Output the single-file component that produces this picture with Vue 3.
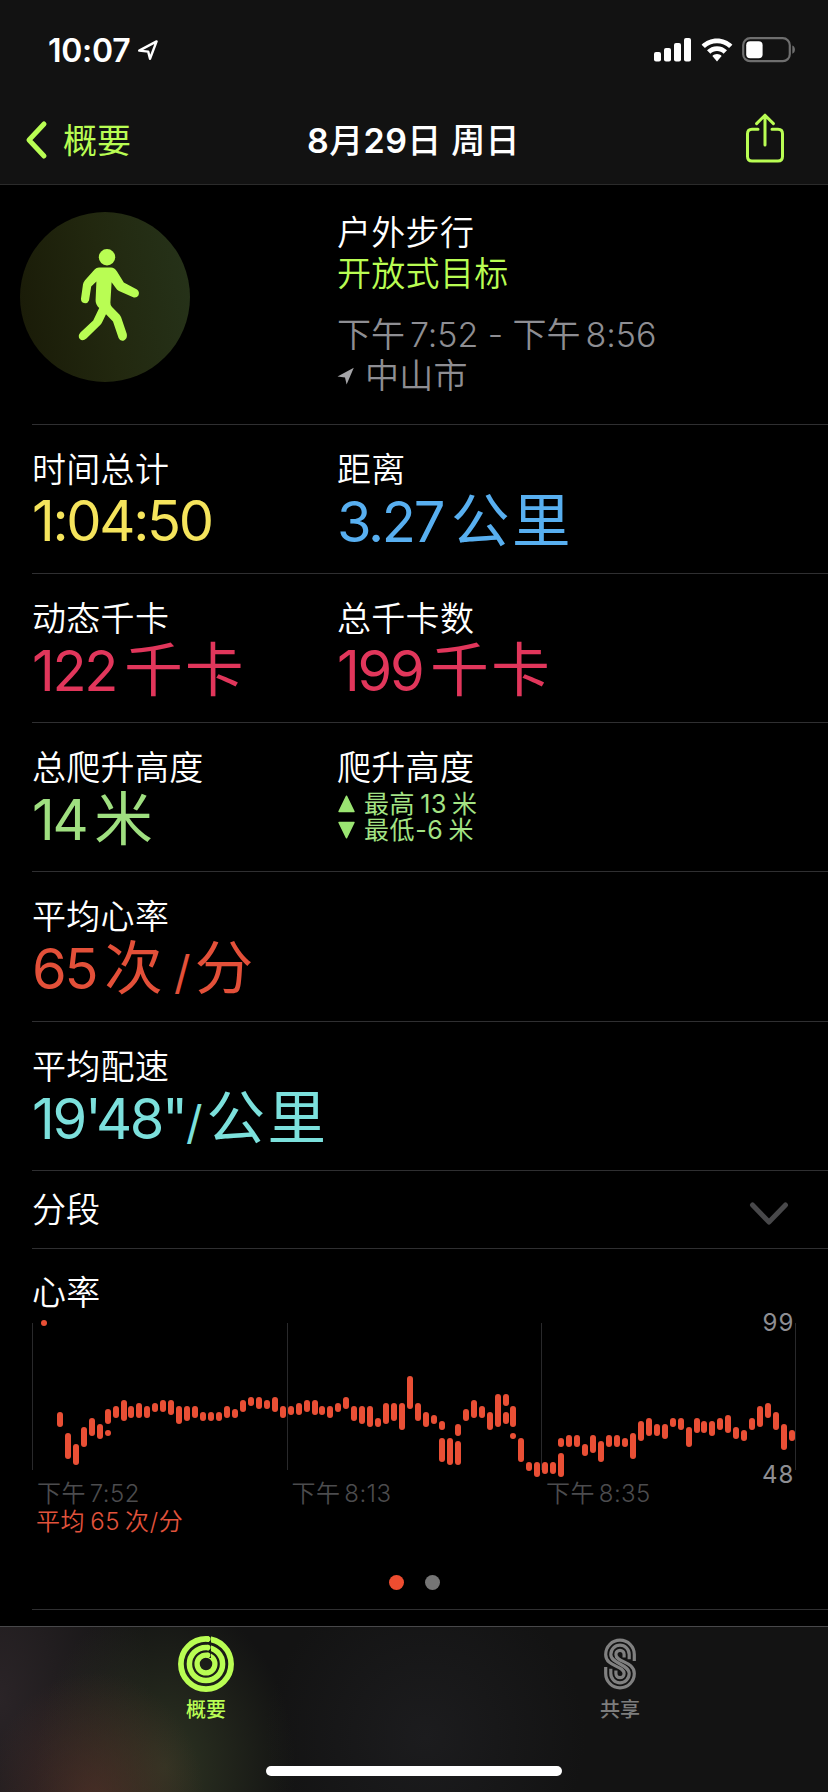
<template>
  <div class="screen">
    <header class="header">
      <div class="status">
        <div class="clock">
          <span class="time">10:07</span>
          <svg class="locate" viewBox="0 0 22 22" width="22" height="22">
            <path d="M2.2 11.6 L19.6 2.4 L13 19.8 L11.2 12.6 Z" />
          </svg>
        </div>
        <div class="indicators">
          <svg viewBox="0 0 38 24" width="38" height="24" fill="#fff">
            <rect x="0" y="14" width="7" height="9.5" rx="2" />
            <rect x="10" y="10" width="7" height="13.5" rx="2" />
            <rect x="20" y="5" width="7" height="18.5" rx="2" />
            <rect x="30" y="0" width="7" height="23.5" rx="2" />
          </svg>
          <svg class="wifi" viewBox="0 0 32 24" width="32" height="24" fill="#fff">
            <path d="M16 0.5 C22 0.5 27.4 2.9 31.4 6.7 L28.1 10.1 C25 7.1 20.7 5.3 16 5.3 C11.3 5.3 7 7.1 3.9 10.1 L0.6 6.7 C4.6 2.9 10 0.5 16 0.5 Z" />
            <path d="M16 8.2 C19.9 8.2 23.4 9.8 26 12.3 L22.6 15.7 C20.9 14 18.6 13 16 13 C13.4 13 11.1 14 9.4 15.7 L6 12.3 C8.6 9.8 12.1 8.2 16 8.2 Z" />
            <path d="M16 16 C17.8 16 19.4 16.7 20.6 17.9 L16 23.6 L11.4 17.9 C12.6 16.7 14.2 16 16 16 Z" />
          </svg>
          <svg class="battery" viewBox="0 0 54 26" width="54" height="26">
            <rect x="1.2" y="1.2" width="46.6" height="23" rx="7" fill="none" stroke="#6e6e6e" stroke-width="2.2" />
            <rect x="4.2" y="4.2" width="16.4" height="17" rx="4" fill="#fff" />
            <path d="M50.3 8.6 C53.8 9.6 53.8 15.8 50.3 16.8 Z" fill="#6e6e6e" />
          </svg>
        </div>
      </div>
      <nav class="nav">
        <div class="back">
          <svg viewBox="0 0 24 40" width="24" height="40">
            <path d="M20 4 L5 20 L20 36" />
          </svg>
          <span>概要</span>
        </div>
        <h1 class="title"><b>8</b>月<b>29</b>日 周日</h1>
        <svg class="share" viewBox="0 0 40 50" width="40" height="50">
          <path d="M13 16.2 H7 Q2.5 16.2 2.5 20.7 V43.4 Q2.5 47.9 7 47.9 H33 Q37.5 47.9 37.5 43.4 V20.7 Q37.5 16.2 33 16.2 H27" />
          <path d="M20 32 V2.5 M11.6 10.6 L20 2.2 L28.4 10.6" />
        </svg>
      </nav>
    </header>

    <main class="content">
      <section class="summary">
        <div class="badge">
          <svg viewBox="0 0 170 170" width="170" height="170">
            <circle cx="87" cy="45.2" r="8.2" />
            <path d="M79 55.5 H91 Q94.5 55.5 97 59.5 L103.8 70.6 L117 77.6 Q120 80 118.4 83.4 Q116.5 86.6 112.6 85 L99 79 Q97 78 95.6 75.8 L91.6 70.2 L90.4 90.5 Q90.2 93.4 92 95 L99.4 102.6 Q100.6 104 101.2 105.6 L106.8 122 Q107.6 126.6 104 128.4 Q100.2 129.6 98.6 126 L93 109.6 L86 102.2 L82.4 109.8 Q81.6 111.6 80.2 113 L66.4 126.6 Q62.6 129.8 59.8 127 Q57.4 124 60.4 120.6 L73.2 108.6 L79.2 96 Q75.4 92.6 75.6 88 L76.4 69.6 L71.2 74.6 L69 88.4 Q67.6 91.8 64 91 Q60.8 90 61 86.4 L63 72.2 Q63.4 70 65 68.2 L74.6 57.6 Q76.4 55.6 79 55.5 Z" />
          </svg>
        </div>
        <div class="summary-text">
          <p>户外步行</p>
          <p class="accent">开放式目标</p>
          <p class="period">下午<i></i>7:52 - 下午<i></i>8:56</p>
          <p class="place">
            <svg viewBox="0 0 18 18" width="18" height="18"><path d="M0.5 9.6 L16.8 0.8 L9.6 17.4 L8 10.6 Z" /></svg>
            <span>中山市</span>
          </p>
        </div>
      </section>

      <section v-for="(row, i) in rows" :key="i" class="row">
        <div v-for="item in row" :key="item.label" class="metric">
          <p class="label">{{ item.label }}</p>
          <p v-if="item.value" class="value" :class="item.color">
            <span class="num">{{ item.value }}</span><span v-if="item.slash" class="slash">/</span><span v-if="item.pre" class="unit">{{ item.pre }}</span><span v-if="item.pre" class="slash wide">/</span><span class="unit" :class="{ tight: item.slash || item.pre }">{{ item.unit }}</span>
          </p>
          <div v-else class="elevation">
            <p><svg viewBox="0 0 16 17" width="17" height="18"><path d="M8 1.2 L15 15.6 H1 Z" /></svg><span>最高<i></i>13<i></i>米</span></p>
            <p><svg viewBox="0 0 16 17" width="17" height="18"><path d="M8 15.8 L15 1.4 H1 Z" /></svg><span>最低-6<i></i>米</span></p>
          </div>
        </div>
      </section>

      <section class="splits">
        <span>分段</span>
        <svg viewBox="0 0 40 24" width="40" height="24"><path d="M3.5 3 L20 20 L36.5 3" /></svg>
      </section>

      <section class="heart">
        <p class="label">心率</p>
        <svg class="chart" viewBox="0 30 2484 510" width="828" height="170">
          <rect v-for="x in gridLines" :key="x" :x="x" y="69" width="3" height="441" fill="#29292b" />
          <rect
            v-for="(bar, i) in bars"
            :key="'b' + i"
            :x="bar[0] - 9"
            :y="bar[1]"
            width="18"
            :height="bar[2] - bar[1]"
            rx="9"
            fill="#e94f35"
          />
          <text x="2383" y="94" class="bound">99</text>
          <text x="2383" y="550" class="bound">48</text>
        </svg>
        <div class="times">
          <span v-for="t in times" :key="t">下午<i></i>{{ t }}</span>
        </div>
        <p class="average">平均<i></i>65<i></i>次/分</p>
        <div class="dots"><b class="on"></b><b></b></div>
      </section>
    </main>

    <footer class="tabbar">
      <div class="tab active">
        <svg viewBox="-28 -28 56 56" width="56" height="56">
          <g fill="none" stroke="#b9fd53">
            <circle r="25.1" stroke-width="5.7" />
            <circle r="16.6" stroke-width="5.5" />
            <circle r="8.9" stroke-width="5.3" />
          </g>
          <path d="M4 -29 V-6" stroke="#161c12" stroke-width="2" />
          <g fill="#b9fd53">
            <circle cx="1.8" cy="-25" r="2.8" />
            <circle cx="1.8" cy="-16.5" r="2.7" />
            <circle cx="1.8" cy="-8.8" r="2.6" />
          </g>
        </svg>
        <span>概要</span>
      </div>
      <div class="tab">
        <svg viewBox="-28 -28 56 56" width="56" height="56">
          <g fill="none" stroke="#808080" stroke-width="3.2">
            <path d="M14.3 -3 V-9.6 A14.3 14.3 0 0 0 -14.3 -9.6 C-14.3 3 4.1 1.4 4.1 9.6 A4.1 4.1 0 0 1 -4.1 9.6 V6.6" />
            <path d="M9.2 -4.8 V-9.6 A9.2 9.2 0 0 0 -9.2 -9.6 C-9.2 -0.4 9.2 0.4 9.2 9.6 A9.2 9.2 0 0 1 -9.2 9.6 V4.8" />
            <path d="M4.1 -6.6 V-9.6 A4.1 4.1 0 0 0 -4.1 -9.6 C-4.1 -1.4 14.3 -3 14.3 9.6 A14.3 14.3 0 0 1 -14.3 9.6 V3" />
          </g>
        </svg>
        <span>共享</span>
      </div>
      <div class="home"></div>
    </footer>
  </div>
</template>

<script setup>
const rows = [
  [
    { label: '时间总计', value: '1:04:50', unit: '', color: 'yellow' },
    { label: '距离', value: '3.27', unit: '公里', color: 'blue' }
  ],
  [
    { label: '动态千卡', value: '122', unit: '千卡', color: 'pink' },
    { label: '总千卡数', value: '199', unit: '千卡', color: 'pink' }
  ],
  [
    { label: '总爬升高度', value: '14', unit: '米', color: 'green' },
    { label: '爬升高度' }
  ],
  [{ label: '平均心率', value: '65', pre: '次', unit: '分', color: 'red' }],
  [{ label: '平均配速', value: '19\'48"', slash: true, unit: '公里', color: 'teal' }]
]

const times = ['7:52', '8:13', '8:35']
const gridLines = [96, 861, 1623, 2385]

// [center x, top, bottom] in 1/3 px
const bars = [
  [132, 60, 78], [180, 336, 381], [204, 399, 477], [228, 432, 495], [252, 381, 441],
  [276, 354, 408], [300, 372, 417], [324, 327, 372], [324, 390, 408], [348, 318, 354],
  [372, 300, 363], [393, 318, 354], [417, 309, 354], [441, 318, 354], [465, 309, 336],
  [489, 300, 336], [513, 300, 345], [537, 318, 372], [561, 318, 363], [585, 318, 354],
  [609, 336, 363], [633, 336, 363], [657, 336, 363], [681, 318, 354], [705, 327, 354],
  [729, 300, 336], [753, 291, 318], [777, 291, 327], [801, 300, 327], [825, 291, 336],
  [849, 318, 354], [873, 318, 345], [897, 309, 345], [921, 300, 336], [945, 300, 345],
  [966, 318, 345], [990, 318, 354], [1014, 309, 336], [1038, 291, 327], [1062, 318, 363],
  [1086, 318, 372], [1110, 318, 381], [1134, 354, 381], [1158, 309, 372], [1182, 309, 363],
  [1206, 309, 390], [1230, 228, 327], [1254, 309, 363], [1278, 336, 381], [1302, 345, 372],
  [1326, 363, 390], [1326, 414, 486], [1350, 414, 495], [1374, 372, 408], [1374, 423, 495],
  [1398, 327, 363], [1422, 300, 354], [1446, 318, 354], [1470, 336, 390], [1494, 282, 381],
  [1518, 282, 318], [1518, 336, 372], [1539, 318, 381], [1539, 399, 417], [1563, 414, 486],
  [1587, 486, 513], [1611, 486, 531], [1635, 486, 522], [1659, 486, 522], [1683, 414, 441],
  [1683, 459, 531], [1707, 405, 441], [1731, 405, 441], [1755, 432, 468], [1779, 405, 459],
  [1803, 423, 486], [1827, 405, 441], [1851, 405, 441], [1875, 414, 441], [1899, 399, 477],
  [1923, 363, 423], [1947, 354, 408], [1971, 372, 408], [1995, 372, 417], [2019, 354, 381],
  [2043, 354, 390], [2067, 381, 441], [2091, 354, 399], [2112, 363, 399], [2136, 363, 408],
  [2160, 354, 390], [2184, 345, 399], [2208, 381, 417], [2232, 390, 423], [2256, 354, 390],
  [2280, 318, 381], [2304, 309, 354], [2328, 336, 390], [2352, 372, 450], [2376, 390, 423]
]
</script>

<style>
body {
  background: #000;
}
</style>

<style scoped>
.screen {
  width: 828px;
  height: 1792px;
  display: flex;
  flex-direction: column;
  overflow: hidden;
  background: #000;
  color: #fff;
  font-family: Inter, 'Noto Sans CJK SC', sans-serif;
  font-size: 34px;
}

p,
h1 {
  margin: 0;
  white-space: nowrap;
}

svg {
  display: block;
  flex: none;
}

.header {
  height: 184px;
  flex: none;
  background: #121212;
  border-bottom: 1px solid #2b2b2b;
}

.status {
  height: 100px;
  padding: 0 32px 0 48px;
  display: flex;
  align-items: center;
  justify-content: space-between;
}

.clock,
.indicators {
  display: flex;
  align-items: center;
}

.time {
  font-size: 32px;
  font-weight: 600;
  letter-spacing: -0.3px;
}

.locate {
  margin-left: 7px;
  fill: none;
  stroke: #fff;
  stroke-width: 2.4;
  stroke-linejoin: round;
}

.wifi {
  margin: 0 9px;
}

.nav {
  height: 84px;
  padding: 0 43px 8px 24px;
  display: grid;
  grid-template-columns: 200px 1fr 200px;
  align-items: center;
  box-sizing: border-box;
}

.back {
  display: flex;
  align-items: center;
  gap: 15px;
  color: #b9fd53;
}

.back svg {
  margin-top: 4px;
  fill: none;
  stroke: #b9fd53;
  stroke-width: 5;
  stroke-linecap: round;
  stroke-linejoin: round;
}

.title {
  font-size: 34px;
  font-weight: 500;
  text-align: center;
  padding-left: 18px;
  letter-spacing: 0.4px;
}

.title b {
  font-weight: 600;
}

.share {
  justify-self: end;
  fill: none;
  stroke: #b9fd53;
  stroke-width: 3;
  stroke-linecap: round;
  stroke-linejoin: round;
}

.content {
  flex: none;
  height: 1441px;
}

.summary {
  display: flex;
  height: 239px;
  padding: 27px 0 0 20px;
  box-sizing: border-box;
}

.badge {
  width: 170px;
  height: 170px;
  border-radius: 50%;
  background: linear-gradient(80deg, #191a07, #22280f 50%, #26331a);
}

.badge svg {
  fill: #b9fd53;
}

.summary-text {
  margin-left: 147px;
  line-height: 41px;
  font-weight: 350;
  letter-spacing: 0.3px;
}

.accent {
  color: #b9fd53;
}

.period,
.place {
  height: 41px;
  color: #8e8e93;
}

.period {
  margin-top: 20px;
  letter-spacing: -0.05px;
}

.place {
  display: flex;
  align-items: center;
  gap: 10px;
}

.place svg {
  fill: #a5a5a8;
}

.row,
.splits,
.heart {
  margin-left: 32px;
  border-top: 1px solid #2f2f31;
  box-sizing: border-box;
}

.row {
  height: 149px;
  display: flex;
}

.row:nth-of-type(5) {
  height: 150px;
}

.metric {
  width: 305px;
  padding-top: 24px;
  flex: none;
}

.label {
  line-height: 41px;
  font-weight: 350;
  letter-spacing: 0.3px;
}

.value {
  display: flex;
  align-items: baseline;
  font-size: 56px;
  font-weight: 400;
  line-height: 62px;
}

.num {
  letter-spacing: -2.3px;
}

.unit {
  margin-left: 8px;
  font-size: 58.5px;
  letter-spacing: 2.4px;
}

.unit.tight {
  margin-left: 4px;
}

.slash {
  margin-left: 0;
  font-size: 46px;
}

.slash.wide {
  margin-left: 9px;
}

.yellow { color: #f5e45c; }
.blue { color: #58aff0; }
.pink { color: #e1365b; }
.green { color: #9fdf80; }
.red { color: #e35039; }
.teal { color: #7ce0dc; }

.elevation {
  padding-top: 3px;
  color: #a3e384;
  font-size: 25px;
  line-height: 26px;
  letter-spacing: 0.6px;
}

.elevation p {
  display: flex;
  align-items: center;
  gap: 9px;
  height: 26px;
}

.elevation svg {
  margin-left: 1px;
  fill: #9be572;
  stroke: #9be572;
  stroke-width: 1.5;
  stroke-linejoin: round;
}

i {
  display: inline-block;
  width: 5px;
}

.splits {
  height: 78px;
  padding: 0 39px 4px 0;
  display: flex;
  align-items: center;
  justify-content: space-between;
  font-weight: 350;
}

.splits svg {
  fill: none;
  stroke: #48484a;
  stroke-width: 5;
  stroke-linecap: round;
  stroke-linejoin: round;
  margin-top: 13px;
}

.heart {
  height: 362px;
  padding-top: 23px;
  border-bottom: 1px solid #2f2f31;
}

.chart {
  margin: -3px 0 0 -32px;
  overflow: visible;
}

.bound {
  fill: #8e8e93;
  font-size: 72px;
  letter-spacing: 3px;
  text-anchor: end;
  font-weight: 400;
}

.times {
  display: flex;
  color: #4c4c4e;
  font-size: 24px;
  font-weight: 350;
  line-height: 28px;
  letter-spacing: 0.4px;
}

.times i {
  width: 4px;
}

.times span {
  width: 254.5px;
  padding-left: 5px;
  box-sizing: border-box;
}

.average {
  padding-left: 4px;
  color: #e2533c;
  font-size: 24px;
  font-weight: 350;
  line-height: 28px;
  letter-spacing: 0.6px;
}

.dots {
  display: flex;
  justify-content: center;
  gap: 21px;
  margin: 39px 31px 0 0;
}

.dots b {
  width: 15px;
  height: 15px;
  border-radius: 50%;
  background: #757575;
}

.dots .on {
  background: #ee4d30;
}

.tabbar {
  position: relative;
  flex: 1;
  display: flex;
  border-top: 1px solid #48484a;
  background:
    radial-gradient(ellipse 110px 130px at 95px 175px, rgba(90, 50, 42, 0.65), transparent),
    radial-gradient(ellipse 130px 170px at 165px 140px, rgba(52, 60, 38, 0.8), transparent),
    radial-gradient(ellipse 150px 260px at 0 70px, rgba(48, 40, 44, 0.8), transparent),
    radial-gradient(ellipse 160px 160px at 425px 110px, #1c1c1e, transparent),
    #131313;
}

.tab {
  flex: 1;
  display: flex;
  flex-direction: column;
  align-items: center;
  padding-top: 9px;
  color: #7d7d7d;
  font-size: 20px;
  font-weight: 500;
}

.tab span {
  margin-top: 6px;
  line-height: 24px;
}

.tab.active {
  flex: none;
  width: 412px;
  color: #b9fd53;
}

.tab:nth-child(2) {
  flex: none;
  width: 416px;
}

.home {
  position: absolute;
  left: 266px;
  bottom: 16px;
  width: 296px;
  height: 10px;
  border-radius: 5px;
  background: #fff;
}
</style>
